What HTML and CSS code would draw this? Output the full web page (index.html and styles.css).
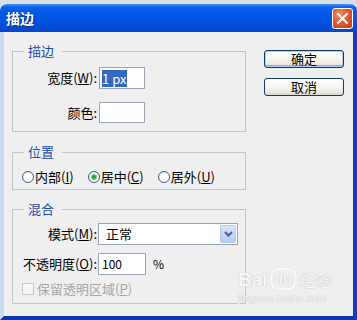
FILE: index.html
```html
<!DOCTYPE html>
<html lang="zh">
<head>
<meta charset="utf-8">
<title>描边</title>
<link rel="stylesheet" href="styles.css">
</head>
<body>
<div class="window">
  <div class="titlebar">
    <span class="title">描边</span>
    <span class="close">
      <svg width="21" height="21" viewBox="0 0 21 21"><path d="M6 6 L15 15 M15 6 L6 15" stroke="#fff" stroke-width="2" stroke-linecap="square"/></svg>
    </span>
  </div>
  <div class="frame">
    <div class="main">
      <fieldset class="group g1">
        <legend>描边</legend>
        <div class="row">
          <span class="lbl">宽度(<u>W</u>):</span>
          <span class="field fw"><span class="sel">1 px</span></span>
        </div>
        <div class="row row2">
          <span class="lbl">颜色:</span>
          <span class="swatch"></span>
        </div>
      </fieldset>
      <fieldset class="group g2">
        <legend>位置</legend>
        <div class="radios">
          <span class="radio"><span class="circle"></span>内部(<u>I</u>)</span>
          <span class="radio"><span class="circle on"></span>居中(<u>C</u>)</span>
          <span class="radio"><span class="circle"></span>居外(<u>U</u>)</span>
        </div>
      </fieldset>
      <fieldset class="group g3">
        <legend>混合</legend>
        <div class="row">
          <span class="lbl">模式(<u>M</u>):</span>
          <span class="select"><span class="seltext">正常</span><span class="dd"><svg width="9" height="6" viewBox="0 0 9 6"><path d="M1 1 L4.5 4.5 L8 1" stroke="#4a5f86" stroke-width="2" fill="none"/></svg></span></span>
        </div>
        <div class="row rowo">
          <span class="lbl">不透明度(<u>O</u>):</span>
          <span class="field fo">100</span>
          <span class="pct">%</span>
        </div>
        <div class="row rowc">
          <span class="check"></span>
          <span class="dis">保留透明区域(<u>P</u>)</span>
        </div>
      </fieldset>
    </div>
    <div class="buttons">
      <button class="btn default">确定</button>
      <button class="btn">取消</button>
    </div>
  </div>
  <div class="watermark">
    <div class="wm-logo"><span class="wm-bai">Bai</span><span class="wm-du">du</span><span class="wm-jy">经验</span></div>
    <div class="wm-url">jingyan.baidu.com</div>
  </div>
</div>
</body>
</html>
```
FILE: styles.css
```css
html, body {
  margin: 0;
  padding: 0;
}
body {
  width: 357px;
  height: 320px;
  overflow: hidden;
  background: #d6dee8;
  font-family: "Noto Sans CJK SC", "Noto Sans", sans-serif;
  font-size: 13px;
  color: #000;
}
u { text-decoration: underline; text-underline-offset: 1px; }

.window {
  margin-top: 4px;
  height: 316px;
  display: flex;
  flex-direction: column;
  position: relative;
}
.titlebar {
  height: 28px;
  flex: none;
  box-sizing: border-box;
  background: linear-gradient(#4a94fa 0, #0b60ea 3px, #0256e6 40%, #0150dc 75%, #0a44c4 100%);
  border-radius: 7px 7px 0 0;
  display: flex;
  align-items: center;
  justify-content: space-between;
  padding: 0 4px 0 6px;
}
.title {
  color: #fff;
  font-weight: bold;
  font-size: 14px;
  line-height: 16px;
  text-shadow: 1px 1px 0 #0a2a8c;
}
.close {
  width: 21px;
  height: 21px;
  box-sizing: border-box;
  border: 1px solid #fff;
  border-radius: 3px;
  background: radial-gradient(circle at 35% 30%, #f09070 0, #e05a34 45%, #c63c16 100%);
  display: flex;
  margin-top: 1px;
}
.close svg { margin: -1px; }

.frame {
  flex: 1;
  display: flex;
  gap: 18px;
  background: #efefef;
  border-left: 4px solid #c9dbf5;
  border-right: 4px solid #0c3bc6;
  border-bottom: 4px solid #0a36b6;
  padding: 11px 9px 0 8px;
}
.main {
  width: 234px;
  flex: none;
}
.group {
  margin: 0;
  padding: 0;
  border: 1px solid #c4c4c4;
  min-width: 0;
}
.group legend {
  margin-left: 11px;
  padding: 0 8px 0 4px;
  font-size: 13px;
  line-height: 16px;
  color: #1d4db2;
}
.g1 { padding: 8px 0 8px 0; }
.g2 { margin-top: 12px; padding: 9px 0 4px 0; }
.g3 { margin-top: 11px; padding: 6px 0 7px 0; }

.row {
  display: flex;
  align-items: center;
  height: 22px;
}
.row2 { margin-top: 13px; height: 21px; }
.rowo { margin-top: 8px; }
.rowc { margin-top: 7px; height: 14px; }

.lbl {
  width: 84px;
  flex: none;
  text-align: right;
  line-height: 16px;
  white-space: nowrap;
}
.field {
  box-sizing: border-box;
  height: 22px;
  background: #fff;
  border: 1px solid #9aa6b6;
  display: flex;
  align-items: center;
  line-height: 16px;
}
.fw {
  width: 46px;
  margin-left: 2px;
  padding-left: 2px;
}
.sel {
  background: #316ac5;
  color: #fff;
  line-height: 17px;
  padding: 0 1px 0 0;
}
.swatch {
  box-sizing: border-box;
  width: 46px;
  height: 21px;
  margin-left: 2px;
  background: #fff;
  border: 1px solid #9aa6b6;
}
.radios {
  display: flex;
  align-items: center;
  height: 16px;
  padding-left: 9px;
  gap: 14px;
  line-height: 16px;
}
.radio {
  display: flex;
  align-items: center;
  white-space: nowrap;
}
.circle {
  width: 12px;
  height: 12px;
  box-sizing: border-box;
  border: 1px solid #3c5e8a;
  border-radius: 50%;
  background: radial-gradient(circle at 60% 60%, #fff 0, #fff 40%, #e4e4dc 100%);
  margin-right: 1px;
  display: flex;
  align-items: center;
  justify-content: center;
}
.circle.on::after {
  content: "";
  width: 4px;
  height: 4px;
  border-radius: 50%;
  background: #2aa42a;
  box-shadow: 0 0 0 1px #7fd07f;
}
.select {
  box-sizing: border-box;
  width: 140px;
  height: 22px;
  margin-left: 1px;
  background: #fff;
  border: 1px solid #9aa6b6;
  display: flex;
  align-items: center;
  justify-content: space-between;
  padding: 1px;
}
.seltext {
  padding-left: 6px;
  line-height: 16px;
}
.dd {
  width: 16px;
  height: 18px;
  box-sizing: border-box;
  border: 1px solid #b8ccf2;
  border-radius: 2px;
  background: linear-gradient(#d6e2fc, #b6cbf6);
  display: flex;
  align-items: center;
  justify-content: center;
}
.fo {
  width: 48px;
  margin-left: 1px;
  padding-left: 3px;
  font-size: 12px;
}
.pct {
  margin-left: 7px;
  font-size: 12px;
  line-height: 16px;
}
.check {
  width: 12px;
  height: 12px;
  box-sizing: border-box;
  margin-left: 9px;
  border: 1px solid #cac8bc;
  background: #f6f6f4;
}
.dis {
  margin-left: 3px;
  color: #a6a6a6;
  line-height: 16px;
  white-space: nowrap;
}

.buttons {
  margin-top: 7px;
  width: 80px;
  display: flex;
  flex-direction: column;
  gap: 10px;
}
.btn {
  box-sizing: border-box;
  width: 80px;
  height: 18px;
  padding: 0;
  margin: 0;
  border: 1px solid #0f3a6c;
  border-radius: 3px;
  background: linear-gradient(#ffffff 0, #f6f6f2 50%, #e8e6de 85%, #d8d4c8 100%);
  font-family: "Noto Sans CJK SC", sans-serif;
  font-size: 13px;
  line-height: 16px;
  color: #000;
}
.btn.default {
  box-shadow: inset 0 0 0 1px #b6caf0, inset 0 -1px 0 1px #8fb0e6;
}

.watermark {
  position: absolute;
  left: 238px;
  top: 256px;
  color: #f7f7f7;
  text-shadow: 0 0 1px #c2c2c2, 0 0 1px #c8c8c8;
  pointer-events: none;
}
.wm-logo {
  display: flex;
  align-items: flex-end;
  height: 30px;
}
.wm-bai {
  font-family: "Liberation Sans", sans-serif;
  font-weight: bold;
  font-size: 19px;
  line-height: 20px;
}
.wm-du {
  font-family: "Liberation Sans", sans-serif;
  font-weight: bold;
  font-size: 14px;
  line-height: 16px;
  margin-left: 2px;
  padding: 1px 3px;
  border-radius: 8px;
  border: 2px solid #f7f7f7;
  box-shadow: 0 0 1px #c2c2c2;
}
.wm-jy {
  font-size: 16px;
  line-height: 20px;
  margin-left: 3px;
}
.wm-url {
  font-family: "Liberation Sans", sans-serif;
  font-size: 10px;
  line-height: 12px;
  margin-top: 3px;
  letter-spacing: 0.5px;
}
```
